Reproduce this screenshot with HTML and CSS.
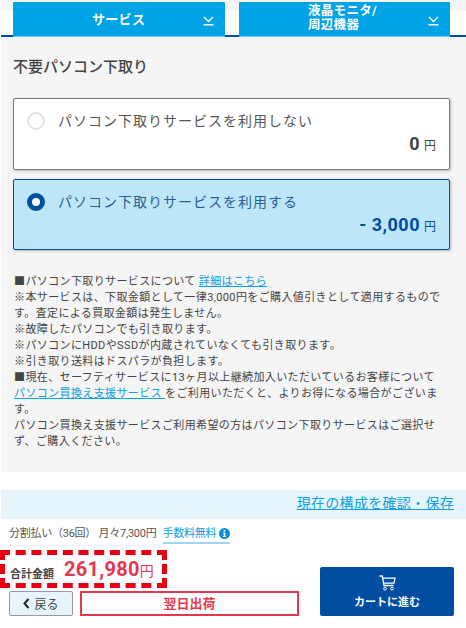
FILE: index.html
```html
<!DOCTYPE html>
<html lang="ja">
<head>
    <meta charset="UTF-8">
    <meta name="viewport" content="width=device-width, initial-scale=1.0">
    <title>不要パソコン下取り</title>
    <link rel="stylesheet" href="styles.css">
</head>
<body>
    <div class="tabs-wrap">
        <div class="tabs">
            <div class="tab">
                <span class="tab-label">サービス</span>
                <svg class="tab-icon" width="11" height="10" viewBox="0 0 11 10"><path d="M1 1l4.500 4.500L10 1M0.500 8.700h10" fill="none" stroke="#fff" stroke-width="1.400"/></svg>
            </div>
            <div class="tab">
                <span class="tab-label tab-label-two">液晶モニタ/<br>周辺機器</span>
                <svg class="tab-icon" width="11" height="10" viewBox="0 0 11 10"><path d="M1 1l4.500 4.500L10 1M0.500 8.700h10" fill="none" stroke="#fff" stroke-width="1.400"/></svg>
            </div>
        </div>
    </div>

    <div class="panel">
        <h2>不要パソコン下取り</h2>

        <div class="card">
            <div class="card-head">
                <span class="radio"></span>
                <span class="card-title">パソコン下取りサービスを利用しない</span>
            </div>
            <div class="card-price"><b>0</b> <span class="yen">円</span></div>
        </div>

        <div class="card card-on">
            <div class="card-head">
                <span class="radio radio-on"></span>
                <span class="card-title">パソコン下取りサービスを利用する</span>
            </div>
            <div class="card-price"><b>- 3,000</b> <span class="yen">円</span></div>
        </div>

        <div class="note">
            ■パソコン下取りサービスについて <a href="#">詳細はこちら</a><br>
            ※本サービスは、下取金額として一律3,000円をご購入値引きとして適用するものです。査定による買取金額は発生しません。<br>
            ※故障したパソコンでも引き取ります。<br>
            ※パソコンにHDDやSSDが内蔵されていなくても引き取ります。<br>
            ※引き取り送料はドスパラが負担します。<br>
            ■現在、セーフティサービスに13ヶ月以上継続加入いただいているお客様について<br>
            <a href="#">パソコン買換え支援サービス </a>をご利用いただくと、よりお得になる場合がございます。<br>
            パソコン買換え支援サービスご利用希望の方はパソコン下取りサービスはご選択せず、ご購入ください。
        </div>
    </div>

    <div class="footer">
        <div class="save-bar"><a href="#">現在の構成を確認・保存</a></div>
        <div class="installment">
            <span>分割払い（36回） 月々7,300円</span>
            <a href="#">手数料無料 <svg class="info" width="11" height="11" viewBox="0 0 11 11"><circle cx="5.500" cy="5.500" r="5.500" fill="#0b8fd6"/><path d="M4.600 2h1.800v1.600H4.600zM4.200 4.500h2.200v3.400h.7v1.100H3.900V7.900h.8V5.600h-.5z" fill="#fff"/></svg></a>
        </div>
        <div class="buy">
            <div class="buy-left">
                <div class="total">
                    <span class="total-label">合計金額</span>
                    <span class="total-price">261,980</span><span class="total-yen">円</span>
                </div>
                <div class="buy-actions">
                    <button class="back"><svg width="7" height="11" viewBox="0 0 7 11"><path d="M5.500 1L1.500 5.500l4 4.500" fill="none" stroke="#222" stroke-width="2"/></svg>戻る</button>
                    <div class="ship">翌日出荷</div>
                </div>
            </div>
            <button class="cart">
                <svg width="17" height="16" viewBox="0 0 17 16"><path d="M0.500 1h2.700l1.800 9.500h9.500M3.700 3.200h12.300l-1 5H4.600" fill="none" stroke="#fff" stroke-width="1.300"/><circle cx="6" cy="13.600" r="1.400" fill="none" stroke="#fff"/><circle cx="13" cy="13.600" r="1.400" fill="none" stroke="#fff"/></svg>
                <span>カートに進む</span>
            </button>
        </div>
    </div>
</body>
</html>
```

FILE: styles.css
```css
* {
    box-sizing: border-box;
}
body {
    margin: 0;
    font-family: Roboto, "Noto Sans CJK JP", sans-serif;
    color: #444;
    background: #fff;
}
a {
    color: #0ea0e4;
}
.tabs-wrap {
    height: 37px;
    padding-top: 2px;
    background: linear-gradient(#f5f5f5 11px, #fff 11px);
    border-bottom: 2px solid #004ea2;
    margin-left: 1px;
}
.tabs {
    display: flex;
    gap: 14px;
    padding-left: 12px;
}
.tab {
    width: 212px;
    height: 35px;
    display: flex;
    align-items: center;
    position: relative;
    background: #00a3e6;
    border-bottom: 1px solid #6fd0f5;
    border-radius: 1px;
    color: #fff;
    font-size: 13px;
    font-weight: 700;
    padding-bottom: 2px;
}
.tab + .tab {
    width: 211px;
}
.tab-label {
    margin-left: 79px;
    letter-spacing: 0.300px;
}
.tab-label-two {
    margin-left: 69px;
    font-size: 12.500px;
    line-height: 14px;
}
.tab-icon {
    position: absolute;
    right: 11px;
    top: 14px;
}
.panel {
    margin-left: 1px;
    height: 434px;
    padding: 20px 16px 0 12px;
    background: #f5f5f5;
}
h2 {
    margin: 0 0 21px;
    font-size: 15px;
    font-weight: 500;
    line-height: 20px;
    color: #444;
}
.card {
    height: 72px;
    margin-bottom: 9px;
    padding: 12px 13px;
    background: #fff;
    border: 1px solid #777;
    border-radius: 2px;
    box-shadow: 1px 1px 3px rgba(0,0,0,0.25);
}
.card-on {
    height: 71px;
    background: #bde7f9;
    border-color: #004ea2;
    color: #004ea2;
}
.card-head {
    display: flex;
    align-items: center;
    gap: 13px;
}
.card-title {
    font-size: 14px;
    line-height: 20px;
    letter-spacing: 1px;
    color: #555;
}
.card-on .card-title {
    color: #2a5f96;
}
.radio {
    width: 18px;
    height: 18px;
    border-radius: 50%;
    background: #fff;
    border: 2px solid #e2e2e2;
}
.radio-on {
    border: 5px solid #004ea2;
}
.card-price {
    text-align: right;
    line-height: 26px;
}
.card-price b {
    font-size: 18px;
    letter-spacing: 0.500px;
}
.yen {
    font-size: 12px;
    font-weight: 400;
}
.note {
    margin-top: 24px;
    font-size: 11px;
    line-height: 16px;
    letter-spacing: 0.380px;
    color: #444;
    padding-left: 1px;
}
.footer {
    margin-left: 1px;
    border-top: 1px solid #f5f5f5;
    padding-top: 18px;
}
.save-bar {
    height: 29px;
    padding-right: 12px;
    background: #e6f5fc;
    text-align: right;
    font-size: 14px;
    line-height: 26px;
}
.save-bar a {
    letter-spacing: 0.300px;
}
.installment {
    display: flex;
    gap: 6px;
    padding: 7px 0 0 8px;
    font-size: 11px;
    line-height: 16px;
    letter-spacing: -0.250px;
    color: #555;
}
.installment a {
    text-decoration: none;
    border-bottom: 2px solid #9bd6f2;
}
.info {
    vertical-align: -2px;
}
.buy {
    display: flex;
    justify-content: space-between;
    padding-right: 12px;
}
.buy-left {
    width: 299px;
}
.total {
    width: 167px;
    height: 38px;
    margin-top: 6px;
    margin-left: -1px;
    padding: 2px 0 0 5px;
    border: 5px dashed #e60012;
    white-space: nowrap;
}
.total-label {
    font-size: 11px;
    font-weight: 700;
    margin-right: 6px;
    vertical-align: -2px;
}
.total-price {
    font-size: 20px;
    font-weight: 700;
    letter-spacing: 0.300px;
    color: #e5384f;
}
.total-yen {
    font-size: 14px;
    color: #e5384f;
}
.buy-actions {
    display: flex;
    gap: 7px;
    margin-top: 3px;
    padding-left: 8px;
}
.back {
    width: 64px;
    height: 25px;
    display: flex;
    align-items: center;
    justify-content: center;
    gap: 4px;
    padding: 0;
    background: #e6f5fc;
    border: 1px solid #999;
    border-radius: 2px;
    font: 12px Roboto, "Noto Sans CJK JP", sans-serif;
    color: #444;
}
.ship {
    width: 219px;
    height: 25px;
    border: 2px solid #e5384f;
    color: #e5384f;
    font-size: 13px;
    font-weight: 700;
    line-height: 21px;
    text-align: center;
}
.cart {
    width: 134px;
    height: 49px;
    align-self: flex-end;
    margin-top: 14px;
    display: flex;
    flex-direction: column;
    align-items: center;
    justify-content: center;
    gap: 2px;
    padding: 0;
    background: #004ea2;
    border: none;
    border-radius: 2px;
    color: #fff;
    font: 700 11px Roboto, "Noto Sans CJK JP", sans-serif;
}
```
